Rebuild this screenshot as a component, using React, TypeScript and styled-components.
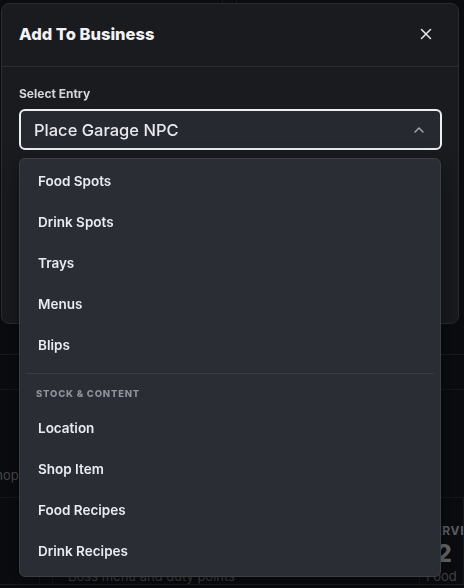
import React from "react";
import styled, { createGlobalStyle } from "styled-components";

const GlobalStyle = createGlobalStyle`
  html, body {
    margin: 0;
    padding: 0;
    background: #0b0c0f;
    overflow: hidden;
  }
  * {
    box-sizing: border-box;
  }
  body {
    font-family: "Inter", "Noto Sans", sans-serif;
  }
`;

const Page = styled.div`
  width: 464px;
  height: 588px;
  display: flex;
  flex-direction: column;
  background: #0b0c0f;
  overflow: hidden;
`;

const PageTop = styled.div`
  height: 355px;
  flex-shrink: 0;
  border-bottom: 1px solid #1a1b1f;
  display: grid;
  grid-template-columns: 223px 14px 1fr;
`;

const TopColumn = styled.div<{ $line?: boolean }>`
  border-right: ${(p) => (p.$line ? "1px solid #1a1b1f" : "none")};
`;

const TabRow = styled.div`
  height: 35px;
  flex-shrink: 0;
  border-bottom: 1px solid #17181c;
`;

const ShopSection = styled.div`
  height: 108px;
  flex-shrink: 0;
  border-bottom: 1px solid #17181c;
  display: flex;
  align-items: flex-end;
  padding-bottom: 14px;
`;

const DimText = styled.span`
  margin-left: -13px;
  font-size: 13px;
  color: #4b4c51;
`;

const CardRow = styled.div`
  height: 87px;
  flex-shrink: 0;
  border-bottom: 1px solid #1f2024;
  display: grid;
  grid-template-columns: 40px 13px 367px 1fr;
`;

const CardEdge = styled.div`
  border-right: 1px solid #18191d;
`;

const Card = styled.div<{ $padLeft: number }>`
  border-right: 1px solid #18191d;
  padding: 12px 0 0 ${(p) => p.$padLeft}px;
  display: flex;
  flex-direction: column;
  justify-content: flex-end;
  padding-bottom: 0;
  white-space: nowrap;
  overflow: hidden;
`;

const CardLabel = styled.div`
  font-size: 12px;
  font-weight: 700;
  letter-spacing: 0.6px;
  color: #5f6166;
  margin-bottom: 2px;
`;

const CardValue = styled.div`
  font-size: 24px;
  font-weight: 800;
  line-height: 28px;
  color: #6a6b6f;
`;

const CardNote = styled.div`
  font-size: 13px;
  color: #45464b;
  line-height: 16px;
`;

const Modal = styled.div`
  position: fixed;
  top: 3px;
  left: 1px;
  width: 458px;
  height: 321px;
  background: #1a1b1f;
  border: 1px solid #2a2c31;
  border-radius: 8px;
  display: flex;
  flex-direction: column;
`;

const ModalHeader = styled.div`
  height: 63px;
  flex-shrink: 0;
  display: flex;
  align-items: center;
  justify-content: space-between;
  padding: 0 26px 0 17px;
  border-bottom: 1px solid #2a2b30;
`;

const Title = styled.h2`
  margin: 0;
  margin-top: -2px;
  font-size: 16.5px;
  font-weight: 800;
  color: #f2f3f5;
`;

const CloseButton = styled.button`
  background: none;
  border: none;
  padding: 0;
  width: 12px;
  height: 12px;
  margin-top: -2px;
  display: flex;
  color: #e8e9ec;
  cursor: pointer;
`;

const ModalBody = styled.div`
  position: relative;
  padding: 20px 17px 0 17px;
`;

const Label = styled.div`
  font-size: 12px;
  font-weight: 700;
  line-height: 14px;
  color: #d4d6db;
  margin-bottom: 8px;
`;

const Trigger = styled.button`
  width: 423px;
  height: 41px;
  display: flex;
  align-items: center;
  justify-content: space-between;
  padding: 0 16px 0 13px;
  background: #262930;
  border: 2px solid #eceef2;
  border-radius: 6px;
  font-family: inherit;
  font-size: 16.5px;
  font-weight: 500;
  color: #e8e9ee;
  cursor: pointer;
`;

const Chevron = styled.span`
  display: flex;
  color: #a8abb3;
`;

const Dropdown = styled.div`
  position: absolute;
  top: 91px;
  left: 17px;
  width: 422px;
  height: 419px;
  background: #2a2d34;
  border: 1px solid #3b3e45;
  border-radius: 6px;
  padding: 1px 0 5px;
  display: flex;
  flex-direction: column;
  box-shadow: 0 8px 24px rgba(0, 0, 0, 0.45);
`;

const Item = styled.div`
  height: 41px;
  display: flex;
  align-items: center;
  padding-left: 18px;
  font-size: 13.5px;
  font-weight: 600;
  color: #e9ebf0;
`;

const Separator = styled.div`
  height: 1px;
  margin: 8px 6px 0;
  background: #393c43;
`;

const GroupLabel = styled.div`
  padding: 14px 16px 7px;
  font-size: 9.5px;
  line-height: 12px;
  font-weight: 800;
  letter-spacing: 0.8px;
  color: #8e929c;
`;

const primaryItems = ["Food Spots", "Drink Spots", "Trays", "Menus", "Blips"];
const stockItems = ["Location", "Shop Item", "Food Recipes", "Drink Recipes"];

export default function App() {
  return (
    <>
      <GlobalStyle />
      <Page>
        <PageTop>
          <TopColumn $line />
          <TopColumn $line />
          <TopColumn />
        </PageTop>
        <TabRow />
        <ShopSection>
          <DimText>Shop</DimText>
        </ShopSection>
        <CardRow>
          <CardEdge />
          <CardEdge />
          <Card $padLeft={15}>
            <CardNote>Boss menu and duty points</CardNote>
          </Card>
          <Card $padLeft={6}>
            <CardLabel>SERVED</CardLabel>
            <CardValue>12</CardValue>
            <CardNote>Food</CardNote>
          </Card>
        </CardRow>
      </Page>

      <Modal>
        <ModalHeader>
          <Title>Add To Business</Title>
          <CloseButton aria-label="Close">
            <svg width="12" height="12" viewBox="0 0 12 12" fill="none">
              <path
                d="M1.5 1.5L10.5 10.5M10.5 1.5L1.5 10.5"
                stroke="currentColor"
                strokeWidth="1.5"
                strokeLinecap="round"
              />
            </svg>
          </CloseButton>
        </ModalHeader>
        <ModalBody>
          <Label>Select Entry</Label>
          <Trigger>
            <span>Place Garage NPC</span>
            <Chevron>
              <svg width="10" height="6" viewBox="0 0 10 6" fill="none">
                <path
                  d="M1 5L5 1L9 5"
                  stroke="currentColor"
                  strokeWidth="1.4"
                  strokeLinecap="round"
                  strokeLinejoin="round"
                />
              </svg>
            </Chevron>
          </Trigger>
          <Dropdown>
            {primaryItems.map((item) => (
              <Item key={item}>{item}</Item>
            ))}
            <Separator />
            <GroupLabel>STOCK &amp; CONTENT</GroupLabel>
            {stockItems.map((item) => (
              <Item key={item}>{item}</Item>
            ))}
          </Dropdown>
        </ModalBody>
      </Modal>
    </>
  );
}
